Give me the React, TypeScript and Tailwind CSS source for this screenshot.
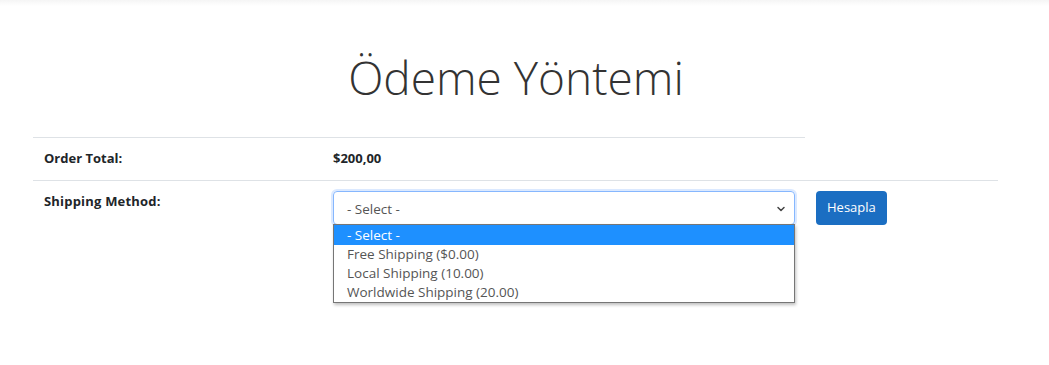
import React from 'react';
import { ChevronDown } from 'lucide-react';

const options = [
  '- Select -',
  'Free Shipping ($0.00)',
  'Local Shipping (10.00)',
  'Worldwide Shipping (20.00)',
];

export default function App() {
  return (
    <div
      className="w-[1049px] h-[365px] bg-white text-[#212529] overflow-hidden"
      style={{ fontFamily: '"Open Sans", "Noto Sans", sans-serif' }}
    >
      {/* top fade */}
      <div className="h-[6px] bg-gradient-to-b from-[#f5f5f5] to-white" />

      <h1 className="mt-[42px] pr-[17px] text-center text-[46px] leading-[58px] font-light text-[#333]">
        Ödeme Yöntemi
      </h1>

      <div className="mt-[31px] ml-[33px]">
        {/* Order total */}
        <div className="w-[772px] border-t border-[#dee2e6] flex h-[43px] items-center text-[13px] font-bold">
          <div className="w-[300px] pl-[11px]">Order Total:</div>
          <div>$200,00</div>
        </div>

        {/* Shipping */}
        <div className="w-[965px] border-t border-[#dee2e6] flex pt-[10px]">
          <div className="w-[300px] pl-[11px] pt-[1px] text-[13px] font-bold tracking-[0.2px]">Shipping Method:</div>

          <div className="relative w-[462px]">
            <div className="h-[34px] flex items-center justify-between rounded-[4px] border border-[#86b7fe] shadow-[0_0_0_2px_rgba(13,110,253,0.15)] pl-[13px] pr-[7px] pt-[2px] text-[13.5px] text-[#555]">
              <span>- Select -</span>
              <ChevronDown size={12} strokeWidth={3} className="text-[#444]" />
            </div>
            <ul className="absolute left-0 top-[33px] w-full bg-white border border-[#767676] shadow-[1px_2px_3px_rgba(0,0,0,0.25)] text-[13.5px] leading-[19px] text-[#555]">
              {options.map((o, i) => (
                <li
                  key={o}
                  className={i === 0 ? 'bg-[#1e90ff] text-white pl-[13px] pt-[1px]' : 'pl-[13px]'}
                >
                  {o}
                </li>
              ))}
            </ul>
          </div>

          <button className="ml-[21px] h-[34px] px-[11px] rounded-[4px] bg-[#1b6ec2] text-white text-[13px]">
            Hesapla
          </button>
        </div>
      </div>
    </div>
  );
}
